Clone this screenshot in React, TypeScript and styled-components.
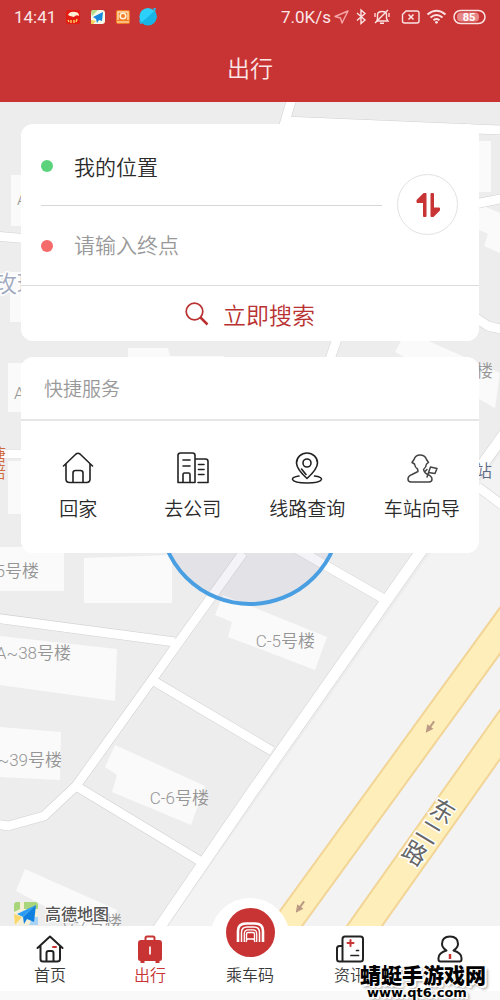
import React from 'react';
import styled, { createGlobalStyle } from 'styled-components';

const RED = '#c83434';
const FONT = 'Roboto, "Noto Sans CJK SC", sans-serif';

const GlobalStyle = createGlobalStyle`
  * { box-sizing: border-box; }
  body { margin: 0; background: #f9f9f9; font-family: ${FONT}; color: #2b2b2b; }
  button, input { font: inherit; color: inherit; border: 0; padding: 0; background: none; }
  svg { display: block; flex: none; }
`;

const Screen = styled.div`
  position: relative;
  display: flex;
  flex-direction: column;
  min-height: 100vh;
  overflow: hidden;
`;

const Header = styled.header`
  background: ${RED};
  color: #fbe6e6;
`;

const StatusBar = styled.div`
  display: flex;
  align-items: center;
  justify-content: space-between;
  height: 34px;
  padding: 0 14px;
  font-size: 17px;
`;

const StatusGroup = styled.div<{ $gap: number }>`
  display: flex;
  align-items: center;
  gap: ${({ $gap }) => $gap}px;
`;

const Title = styled.h1`
  margin: 0;
  height: 68px;
  line-height: 72px;
  text-align: center;
  font-size: 23px;
  font-weight: 350;
`;

const Main = styled.main`
  position: relative;
  flex: 1;
  padding: 22px 21px 0;
`;

const MapCanvas = styled.svg`
  position: absolute;
  inset: 0;
  width: 100%;
  height: 100%;
`;

const Panels = styled.div`
  position: relative;
  display: flex;
  flex-direction: column;
  gap: 16px;
`;

const SearchCard = styled.form`
  background: #fff;
  border-radius: 12px;
`;

const RouteArea = styled.div`
  display: flex;
  align-items: center;
  gap: 15px;
  padding: 0 21px 0 20px;
`;

const Fields = styled.div`
  flex: 1;
  min-width: 0;
`;

const Field = styled.label<{ $divided?: boolean }>`
  display: flex;
  align-items: center;
  gap: 21px;
  height: ${({ $divided }) => ($divided ? 82 : 79)}px;
  padding-top: ${({ $divided }) => ($divided ? 2 : 0)}px;
  border-bottom: ${({ $divided }) => ($divided ? '1px solid #d8d8d8' : '0')};
`;

const Dot = styled.span<{ $color: string }>`
  width: 12px;
  height: 12px;
  border-radius: 50%;
  background: ${({ $color }) => $color};
`;

const PlaceInput = styled.input`
  flex: 1;
  min-width: 0;
  height: 40px;
  font-size: 21px;
  font-weight: 350;
  outline: none;
  &::placeholder { color: #999; opacity: 1; }
`;

const SwapButton = styled.button`
  display: grid;
  place-items: center;
  width: 61px;
  height: 61px;
  border: 1px solid #e2e2e2;
  border-radius: 50%;
`;

const SearchButton = styled.button`
  display: flex;
  align-items: center;
  justify-content: center;
  gap: 14px;
  width: 100%;
  height: 56px;
  border-top: 1px solid #dcdcdc;
  color: #b93231;
  font-size: 23px;
  font-weight: 350;
`;

const ServiceCard = styled.section`
  background: #fff;
  border-radius: 12px;
`;

const ServiceTitle = styled.h2`
  margin: 0;
  height: 64px;
  line-height: 66px;
  padding: 0 23px;
  border-bottom: 2px solid #e6e6e6;
  color: #999;
  font-size: 19px;
  font-weight: 350;
`;

const ServiceGrid = styled.div`
  display: grid;
  grid-template-columns: repeat(4, 1fr);
  height: 132px;
`;

const ServiceButton = styled.button`
  display: flex;
  flex-direction: column;
  align-items: center;
  gap: 12px;
  padding-top: 31px;
  font-size: 19px;
  font-weight: 350;
  line-height: 28px;
  white-space: nowrap;
`;

const Nav = styled.nav`
  position: relative;
  display: grid;
  grid-template-columns: repeat(5, 1fr);
  height: 65px;
  margin-bottom: 9px;
  background: #fff;
`;

const NavButton = styled.button<{ $active?: boolean }>`
  position: relative;
  display: flex;
  flex-direction: column;
  align-items: center;
  gap: 2px;
  padding-top: 8px;
  color: ${({ $active }) => ($active ? RED : '#3a3a3a')};
  font-size: 16px;
  font-weight: 350;
  line-height: 22px;
`;

const NavIcon = styled.span`
  display: grid;
  place-items: center;
  height: 29px;
`;

const RideBadge = styled.span`
  position: absolute;
  top: -28px;
  left: 50%;
  width: 80px;
  height: 80px;
  margin-left: -40px;
  padding-top: 10px;
  border-radius: 50%;
  background: #fff;
  display: flex;
  justify-content: center;
`;

const NavText = styled.span`
  position: relative;
`;

const Stamp = styled.div`
  position: absolute;
  right: 14px;
  bottom: 0;
  color: #000;
  text-align: center;
  white-space: nowrap;
  pointer-events: none;
  text-shadow: 1px 0 #fff, -1px 0 #fff, 0 1px #fff, 0 -1px #fff, 1px 1px #fff,
    -1px -1px #fff, 2px 2px #fff, 3px 3px 3px #999;
`;

const StampName = styled.div`
  font: 900 21px/22px "Noto Sans CJK SC", sans-serif;
`;

const StampSite = styled.div`
  font: 700 13px/15px "DejaVu Sans", sans-serif;
  padding-right: 12px;
`;

const roads = [
  'M293 95 L281 135',
  'M284 121 L500 130',
  'M470 205 L505 198',
  'M470 314 L488 326 L505 330',
  'M340 330 L328 365',
  'M-5 236 L30 239',
  'M-5 454 L30 454',
  'M-5 618 L175 642',
  'M243 553 L176 646 L152 680 L76 786 L44 816 L8 826 L-5 824',
  'M290 545 L384 599',
  'M152 680 L272 751',
  'M76 786 L200 861',
  'M478 487 L505 507',
];
const mainRoad = 'M510 426 L419 554 L250 795 L155 934';

const buildings = [
  '11,175 30,175 30,226 11,226',
  '10,272 30,272 30,322 10,322',
  '128,348 168,348 170,356 224,356 224,362 128,362',
  '8,363 40,363 40,412 8,412',
  '8,461 40,461 40,514 8,514',
  '0,547 64,547 64,591 0,591',
  '84,558 172,555 172,603 84,603',
  '0,636 117,649 115,701 0,685',
  '0,727 61,732 60,780 0,777',
  '115,745 205,786 191,825 112,792 117,775 105,767',
  '223,595 327,637 315,670 228,637 232,622 215,615',
  '25,869 117,910 112,930 90,930 16,891',
  '470,141 491,141 491,192 470,192',
  '470,200 500,213 500,253 484,246 488,234 470,226',
  '402,339 424,339 500,373 495,408 395,352',
];

const arrows = [
  { x: 430, y: 727 },
  { x: 300, y: 907 },
];

function CityMap() {
  return (
    <MapCanvas viewBox="0 102 500 824" preserveAspectRatio="xMidYMin slice" role="img" aria-label="地图">
      <rect x="-500" y="0" width="1500" height="1200" fill="#ededed" />
      <path d="M510 440 L165 930 H510 Z" fill="#f3f3f3" />
      <g fill="#fafafa">
        {buildings.map((points) => <polygon key={points} points={points} />)}
      </g>
      <g fill="none" strokeLinejoin="round">
        <g stroke="#d0d0d0" strokeWidth="10">
          {roads.map((d) => <path key={d} d={d} />)}
          <path d={mainRoad} strokeWidth="12" />
        </g>
        <g stroke="#fff" strokeWidth="9">
          {roads.map((d) => <path key={d} d={d} />)}
          <path d={mainRoad} strokeWidth="11" />
        </g>
      </g>
      <g fill="#feeeb9" stroke="#f2d596" strokeWidth="2">
        <path d="M510 594 L264 933 H297 L510 640 Z" />
        <path d="M510 696 L342 933 H377 L510 745 Z" />
      </g>
      <g stroke="#bb9a85" fill="#bb9a85">
        {arrows.map(({ x, y }) => (
          <g key={x} transform={`translate(${x} ${y}) rotate(36)`}>
            <path d="M0 -7 V1" strokeWidth="2" />
            <path d="M-3 0 H3 L0 6 Z" strokeWidth="1" />
          </g>
        ))}
      </g>
      <circle cx="250" cy="514" r="90" fill="#8078b4" fillOpacity="0.09" stroke="#4a9fe2" strokeWidth="4" />
      <g fontFamily={FONT} fontSize="17" fontWeight="350" fill="#959595">
        <text x="17" y="205">A</text>
        <text x="14" y="399">A</text>
        <text x="39" y="577" textAnchor="end">5号楼</text>
        <text x="71" y="659" textAnchor="end">A~38号楼</text>
        <text x="62" y="766" textAnchor="end">A~39号楼</text>
        <text x="209" y="804" textAnchor="end">C-6号楼</text>
        <text x="315" y="647" textAnchor="end">C-5号楼</text>
        <text x="122" y="928" textAnchor="end">C-7号楼</text>
        <text x="493" y="377" textAnchor="end">号楼</text>
        <text x="492" y="477" textAnchor="end" fill="#5f6b85">站</text>
        <text x="-11" y="461" fill="#d06a3c">塘</text>
        <text x="-11" y="478" fill="#d06a3c">培</text>
      </g>
      <text x="-6" y="292" fontFamily={FONT} fontSize="23" fontWeight="350" fill="#a0aac0" stroke="#fff" strokeWidth="3" paintOrder="stroke">玫瑰</text>
      <g fontFamily={FONT} fontSize="24" fill="#666" stroke="#fff" strokeWidth="3" paintOrder="stroke" textAnchor="middle">
        <text transform="translate(443 811) rotate(31)" y="9">东</text>
        <text transform="translate(429 832) rotate(31)" y="9">二</text>
        <text transform="translate(415 853) rotate(31)" y="9">路</text>
      </g>
      <g>
        <rect x="14" y="902" width="24" height="23" rx="3" fill="#f4f0d8" />
        <path d="M14 912 V905 Q14 902 17 902 H20 V909 Z M24 902 H35 Q38 902 38 905 V909 H24 Z" fill="#a9d67c" />
        <path d="M14 914 L22 917 L15 925 Z" fill="#f8d76b" />
        <path d="M29 925 L33 917 H38 V925 Z" fill="#a8d3f4" />
        <path d="M36 905 L17 914 L23 917 Z" fill="#2b9cf4" />
        <path d="M36 905 L23 917 L24 924 L27 919 L34 922 Z" fill="#0f7fe0" />
      </g>
      <text x="45" y="920" fontFamily={FONT} fontSize="16" fontWeight="500" fill="#555" stroke="#fff" strokeWidth="2" paintOrder="stroke">高德地图</text>
    </MapCanvas>
  );
}

function AppIcons() {
  return (
    <svg width="92" height="20" viewBox="65 7 92 20" aria-hidden="true">
      <rect x="66" y="10" width="14" height="14" rx="2" fill="#e31b12" />
      <path d="M68 15 Q70 11 75 12 Q79 12 79 16 Q76 14 74 17 L70 16 Z" fill="#fff0d8" />
      <path d="M68 20 l1 2 M71 20 v3 M74 20 v3 M77 19 l-1 3" stroke="#ffc65a" strokeWidth="1.5" />
      <rect x="91" y="10" width="14" height="14" rx="3" fill="#f5f7e9" />
      <path d="M91 20 l5 1 -3 3 h-2 z" fill="#f5cf58" />
      <path d="M91 12 q0-2 3-2 h4 l-6 6 z" fill="#b5dd8a" />
      <path d="M103 12 L93 17 L96 19 L97 23 L99 20 L102 21 Z" fill="#1687dc" />
      <rect x="116" y="10" width="14" height="14" rx="2" fill="#f47b24" />
      <path d="M118 20 V12 H128 V20" fill="none" stroke="#ffe0b4" strokeWidth="1.4" />
      <circle cx="123" cy="16" r="2.8" fill="none" stroke="#fff3dc" strokeWidth="1.6" />
      <path d="M117 22 H129" stroke="#ffd39b" strokeWidth="1.5" />
      <path d="M153 8 l3 0 -1 5 z M140 24 l-1-5 5 4 z" fill="#35aede" />
      <circle cx="148" cy="16.5" r="8.6" fill="#2bd0fb" />
      <path d="M154.5 11 A8.6 8.6 0 0 1 141.5 22.5 Z" fill="#17b4e4" />
    </svg>
  );
}

function SystemIcons() {
  return (
    <svg width="152" height="20" viewBox="335 7 152 20" fill="none" stroke="#fbe3e3" strokeWidth="1.4" aria-hidden="true">
      <path d="M349 11 L336 16.5 L341.5 18 L343 23 Z" stroke="#f5a5a5" strokeLinejoin="round" />
      <path d="M358 13 L366 20 L362 23.5 V10 L366 13.5 L358 20.5" />
      <path d="M378 21 H389 L387.5 18.5 V15 Q387.5 11.5 383 11.5 Q378.5 11.5 378.5 15 V18.5 Z M381 23.3 H385" />
      <path d="M389 10 L376 23" />
      <path d="M376 17 V13 M390 13 V17" stroke="#f5a5a5" strokeWidth="2" />
      <path d="M407 11 H418 Q420 11 420 13 V21 Q420 23 418 23 H405.5 Q403.5 23 403.5 21 V14.5 Z" />
      <path d="M409.5 14.5 L414.5 19.5 M414.5 14.5 L409.5 19.5" strokeWidth="1.6" />
      <path d="M428.5 14.5 Q437.5 7 446.5 14.5 M431.5 17.5 Q437.5 12.5 443.5 17.5 M434.5 20.2 Q437.5 18 440.5 20.2" strokeWidth="2" />
      <circle cx="437.5" cy="22.3" r="1.4" fill="#fbe3e3" stroke="none" />
      <rect x="455" y="10.5" width="31" height="13" rx="6.5" strokeWidth="1.5" />
      <rect x="458" y="12.5" width="22" height="9" rx="4" fill="#e88787" stroke="none" />
      <text x="470" y="21" textAnchor="middle" fontFamily="Roboto, sans-serif" fontWeight="700" fontSize="11" fill="#fff" stroke="none">85</text>
    </svg>
  );
}

const line = { fill: 'none', stroke: '#222', strokeWidth: 1.6, strokeLinecap: 'round', strokeLinejoin: 'round' } as const;

const HomeIcon = () => (
  <svg width="32" height="32" viewBox="0 0 32 32" {...line}>
    <path d="M1.5 14 L14 2 Q16 0.5 18 2 L30.5 14 M4 12 V27 Q4 30.5 7.5 30.5 H24.5 Q28 30.5 28 27 V12" />
    <path d="M11 30 V21 Q11 18.5 13.5 18.5 H18.5 Q21 18.5 21 21 V30" />
  </svg>
);

const OfficeIcon = () => (
  <svg width="32" height="32" viewBox="0 0 32 32" {...line}>
    <path d="M1 30.5 V3.5 Q1 1 3.5 1 H15.5 Q18 1 18 3.5 V30.5 Z M18 7 H28.5 Q31 7 31 9.5 V30.5 H21" />
    <path d="M6 8 H13 M6 14 H13 M21.5 12.5 H27 M21.5 17.5 H27 M21.5 22.5 H27 M6 30 V22.5 Q6 21 7.5 21 H11.5 Q13 21 13 22.5 V30" />
  </svg>
);

const PinIcon = () => (
  <svg width="32" height="32" viewBox="0 0 32 32" {...line}>
    <path d="M16 26.5 Q5.5 17 5.5 11 A10.5 10 0 0 1 26.5 11 Q26.5 17 16 26.5 Z" />
    <circle cx="16" cy="11" r="4" />
    <path d="M10.5 17 L15 22.5" />
    <path d="M8 24 Q1 25 1.5 27.5 Q3 31 16 31 Q29 31 30.5 27.5 Q31 25 23.5 24" />
  </svg>
);

const GuideIcon = () => (
  <svg width="32" height="32" viewBox="0 0 32 32" {...line} stroke="#444" strokeWidth="1.5">
    <path d="M21 17.5 L18.5 20 L20 21.5 Q26 24 26 27 Q26 30 23 30 H5 Q2 30 2 27 Q2 24 6 22.5 L12 19.5 L11.5 17 Q9 15.5 8.5 12 L6 10.5 L8 7.5 Q9.5 3 14 3 Q19 3 20.5 7.5 L22.5 10.5 L20.5 12 Q20 15.5 17.5 17.5 L18.5 20" />
    <path d="M21 25 L24.5 15 L31 16.5 L29 21.5 L22.5 20.5" />
  </svg>
);

const services = [
  { label: '回家', icon: <HomeIcon /> },
  { label: '去公司', icon: <OfficeIcon /> },
  { label: '线路查询', icon: <PinIcon /> },
  { label: '车站向导', icon: <GuideIcon /> },
];

const NavHomeIcon = () => (
  <svg width="28" height="28" viewBox="0 0 28 28" {...line} strokeWidth="2">
    <path d="M1.5 13 L14 1.5 L26.5 13 M4.5 11 V24 Q4.5 26.5 7 26.5 H21 Q24 26.5 24 24 V11 M10.5 26 V18 Q10.5 16 12.5 16 H15.5 Q17.5 16 17.5 18 V26" />
    <path d="M17 12 H20" stroke={RED} />
  </svg>
);

const SuitcaseIcon = () => (
  <svg width="26" height="28" viewBox="0 0 26 28">
    <path d="M8.5 6 V3 Q8.5 1.5 10 1.5 H16 Q17.5 1.5 17.5 3 V6" fill="none" stroke={RED} strokeWidth="2" />
    <path d="M4 5 H22 Q25 5 25 8 V24 Q25 26 22.5 26 V28 H18.5 V26 H7.5 V28 H3.5 V26 Q1 26 1 24 V8 Q1 5 4 5 Z" fill={RED} />
    <path d="M13 11.5 V19.5" stroke="#f6dede" strokeWidth="2" />
  </svg>
);

const MetroIcon = () => (
  <svg width="49" height="49" viewBox="0 0 49 49">
    <circle cx="24.5" cy="24.5" r="24.5" fill={RED} />
    <g fill="none" stroke="#fff">
      <path d="M12 34 V23 Q12 15.5 20 15.5 H29 Q37 15.5 37 23 V34" strokeWidth="2.6" />
      <path d="M15.5 34 V24.5 Q15.5 19 21 19 H28 Q33.5 19 33.5 24.5 V34" strokeWidth="1.5" />
      <path d="M18.3 34 V26 Q18.3 21.8 22 21.8 H27 Q30.7 21.8 30.7 26 V34" strokeWidth="1.3" />
      <path d="M22 24.5 H27 Q28.5 24.5 28.5 26 V31 H20.5 V26 Q20.5 24.5 22 24.5 Z M21 31 L20 34 M28 31 L29 34" strokeWidth="1.4" />
    </g>
  </svg>
);

const NewsIcon = () => (
  <svg width="28" height="28" viewBox="0 0 28 28" {...line} strokeWidth="2">
    <path d="M6.5 26.5 V4 Q6.5 1.5 9 1.5 H24.5 Q27 1.5 27 4 V24 Q27 26.5 24.5 26.5 H3.5 Q1 26.5 1 24 V13.5 Q1 11 3.5 11 H6.5" />
    <path d="M20.5 15.5 H22.5 M15 20.5 H22.5" strokeWidth="1.7" />
    <path d="M14.5 5 V11 M11.5 8 H17.5" stroke={RED} />
  </svg>
);

const PersonIcon = () => (
  <svg width="28" height="28" viewBox="0 0 28 28" {...line} strokeWidth="2">
    <path d="M10.5 15.5 Q6 12.5 6 9 Q6 1.5 14 1.5 Q22 1.5 22 9 Q22 12.5 17.5 15.5 Q25.5 18 25.5 23 V24.5 Q25.5 26.5 23.5 26.5 H4.5 Q2.5 26.5 2.5 24.5 V23 Q2.5 18 10.5 15.5 Z" />
    <path d="M14 19 V24" stroke={RED} strokeLinecap="butt" strokeWidth="2.5" />
  </svg>
);

export default function App() {
  return (
    <Screen>
      <GlobalStyle />
      <Header>
        <StatusBar>
          <StatusGroup $gap={9}>
            <span>14:41</span>
            <AppIcons />
          </StatusGroup>
          <StatusGroup $gap={3}>
            <span>7.0K/s</span>
            <SystemIcons />
          </StatusGroup>
        </StatusBar>
        <Title>出行</Title>
      </Header>
      <Main>
        <CityMap />
        <Panels>
          <SearchCard onSubmit={(event) => event.preventDefault()}>
            <RouteArea>
              <Fields>
                <Field $divided>
                  <Dot $color="#5bd37c" />
                  <PlaceInput aria-label="起点" defaultValue="我的位置" />
                </Field>
                <Field>
                  <Dot $color="#f56b6b" />
                  <PlaceInput aria-label="终点" placeholder="请输入终点" />
                </Field>
              </Fields>
              <SwapButton type="button" aria-label="交换起点和终点">
                <svg width="24" height="26" viewBox="0 0 24 26" fill={RED} stroke={RED} strokeWidth="2" strokeLinejoin="round" strokeLinecap="round">
                  <path d="M9.5 2 V24 H8 V10 H1.5 V8.5 L8 2 Z" />
                  <path d="M15.5 2 H17 V16.5 H23 V18 L17 24 H15.5 Z" />
                </svg>
              </SwapButton>
            </RouteArea>
            <SearchButton type="submit">
              <svg width="24" height="24" viewBox="0 0 24 24" fill="none" stroke="#b93231">
                <circle cx="9.5" cy="9.5" r="8.3" strokeWidth="1.7" />
                <path d="M15.5 15.5 L22.5 22.5" strokeWidth="2.5" />
              </svg>
              立即搜索
            </SearchButton>
          </SearchCard>
          <ServiceCard>
            <ServiceTitle>快捷服务</ServiceTitle>
            <ServiceGrid>
              {services.map(({ label, icon }) => (
                <ServiceButton key={label} type="button">
                  {icon}
                  {label}
                </ServiceButton>
              ))}
            </ServiceGrid>
          </ServiceCard>
        </Panels>
      </Main>
      <Nav>
        <NavButton type="button">
          <NavIcon><NavHomeIcon /></NavIcon>
          <NavText>首页</NavText>
        </NavButton>
        <NavButton type="button" $active>
          <NavIcon><SuitcaseIcon /></NavIcon>
          <NavText>出行</NavText>
        </NavButton>
        <NavButton type="button">
          <RideBadge><MetroIcon /></RideBadge>
          <NavIcon />
          <NavText>乘车码</NavText>
        </NavButton>
        <NavButton type="button">
          <NavIcon><NewsIcon /></NavIcon>
          <NavText>资讯</NavText>
        </NavButton>
        <NavButton type="button" aria-label="我的">
          <NavIcon><PersonIcon /></NavIcon>
        </NavButton>
      </Nav>
      <Stamp>
        <StampName>蜻蜓手游戏网</StampName>
        <StampSite>www.qt6.com</StampSite>
      </Stamp>
    </Screen>
  );
}
